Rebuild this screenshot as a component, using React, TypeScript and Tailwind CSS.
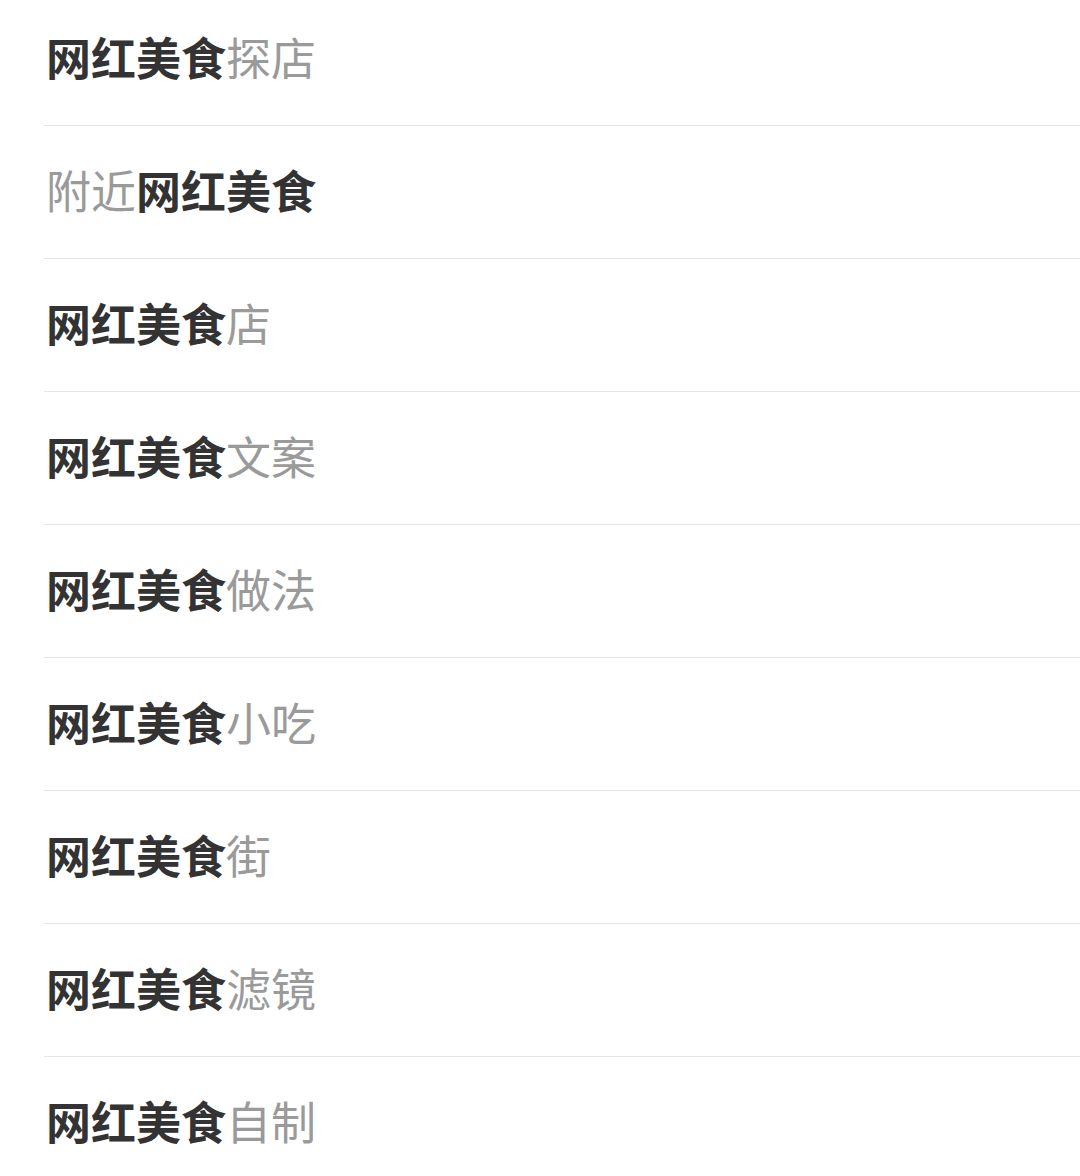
import React from "react";

const rows: { pre?: string; bold: string; post?: string }[] = [
  { bold: "网红美食", post: "探店" },
  { pre: "附近", bold: "网红美食" },
  { bold: "网红美食", post: "店" },
  { bold: "网红美食", post: "文案" },
  { bold: "网红美食", post: "做法" },
  { bold: "网红美食", post: "小吃" },
  { bold: "网红美食", post: "街" },
  { bold: "网红美食", post: "滤镜" },
  { bold: "网红美食", post: "自制" },
];

export default function App() {
  return (
    <div
      className="w-[1080px] h-[1176px] overflow-hidden bg-white"
      style={{ fontFamily: '"Noto Sans CJK SC", "Noto Sans", sans-serif' }}
    >
      <div className="-mt-[7px] pl-[44px]">
        {rows.map((r, i) => (
          <div
            key={i}
            className="h-[133px] flex items-center pb-[6px] border-b border-[#e6e6e6] text-[45px] leading-none"
          >
            <span className="pl-[2px]">
              {r.pre && <span className="text-[#9a9a9a] font-normal">{r.pre}</span>}
              <span className="text-[#333333] font-bold">{r.bold}</span>
              {r.post && <span className="text-[#9a9a9a] font-normal">{r.post}</span>}
            </span>
          </div>
        ))}
      </div>
    </div>
  );
}
